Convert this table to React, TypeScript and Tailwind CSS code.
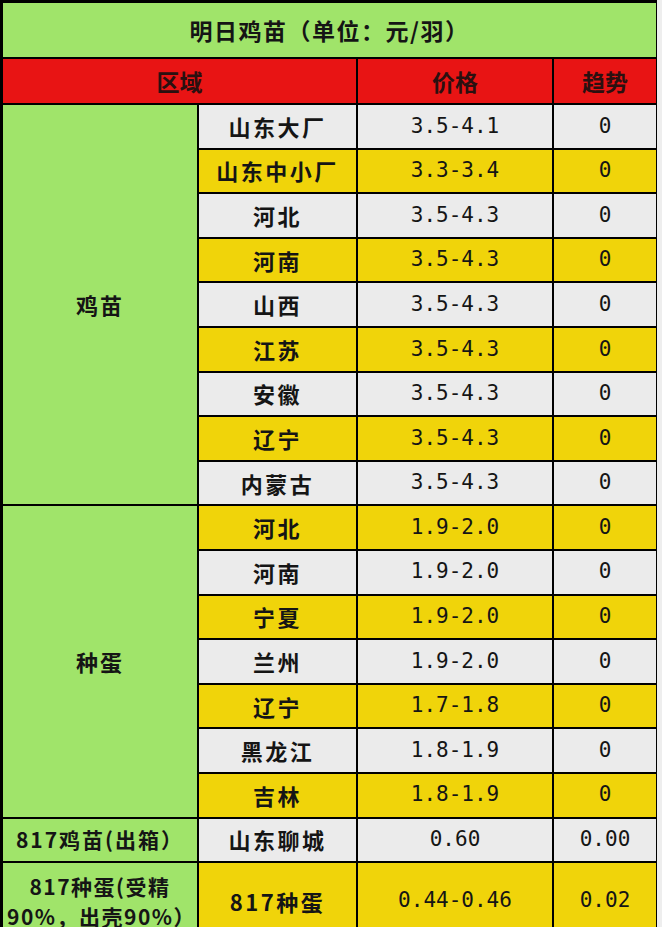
import React from 'react'

const cjk = "font-['Noto_Sans_CJK_SC',sans-serif]";
const mono = "font-['DejaVu_Sans_Mono',monospace]";

const chick = [
  ['山东大厂', '3.5-4.1', '0'],
  ['山东中小厂', '3.3-3.4', '0'],
  ['河北', '3.5-4.3', '0'],
  ['河南', '3.5-4.3', '0'],
  ['山西', '3.5-4.3', '0'],
  ['江苏', '3.5-4.3', '0'],
  ['安徽', '3.5-4.3', '0'],
  ['辽宁', '3.5-4.3', '0'],
  ['内蒙古', '3.5-4.3', '0'],
];

const eggs = [
  ['河北', '1.9-2.0', '0'],
  ['河南', '1.9-2.0', '0'],
  ['宁夏', '1.9-2.0', '0'],
  ['兰州', '1.9-2.0', '0'],
  ['辽宁', '1.7-1.8', '0'],
  ['黑龙江', '1.8-1.9', '0'],
  ['吉林', '1.8-1.9', '0'],
];

const Row = ({ row, yellow }: { row: string[]; yellow: boolean }) => {
  const bg = yellow ? 'bg-[#f0d40a]' : 'bg-[#ebebeb]';
  return (
    <>
      <div className={`${bg} flex items-center justify-center ${cjk} font-bold text-[22px] tracking-[2.5px] text-[#151515]`}>
        {row[0]}
      </div>
      <div className={`${bg} flex items-center justify-center ${mono} text-[21px] text-[#151515]`}>
        {row[1]}
      </div>
      <div className={`${bg} flex items-center justify-center ${mono} text-[21px] text-[#151515]`}>
        {row[2]}
      </div>
    </>
  );
};

export default function App() {
  return (
    <div className="w-[662px] h-[927px] overflow-hidden bg-[#eeeeee]">
      <div className="w-[657px] bg-black pl-[3px] pr-[1px] pt-[3px] grid grid-cols-[194px_157px_194px_102px] grid-rows-[54px_44px_repeat(16,42.6px)_42.6px_76px] gap-[2px]">
        {/* title */}
        <div className={`col-span-4 bg-[#a0e46a] flex items-center justify-center ${cjk} font-bold text-[23px] tracking-[1.5px] text-[#151515]`}>
          明日鸡苗（单位：元/羽）
        </div>

        {/* header */}
        <div className={`col-span-2 bg-[#e81414] flex items-center justify-center ${cjk} font-bold text-[23px] text-[#2a1010]`}>
          区域
        </div>
        <div className={`bg-[#e81414] flex items-center justify-center ${cjk} font-bold text-[23px] text-[#2a1010]`}>
          价格
        </div>
        <div className={`bg-[#e81414] flex items-center justify-center ${cjk} font-bold text-[23px] text-[#2a1010]`}>
          趋势
        </div>

        {/* 鸡苗 */}
        <div className={`row-span-9 bg-[#a0e46a] flex items-center justify-center ${cjk} font-bold text-[22px] tracking-[2px] text-[#151515]`}>
          鸡苗
        </div>
        {chick.map((r, i) => (
          <Row key={'c' + i} row={r} yellow={i % 2 === 1} />
        ))}

        {/* 种蛋 */}
        <div className={`row-span-7 bg-[#a0e46a] flex items-center justify-center ${cjk} font-bold text-[22px] tracking-[2px] text-[#151515]`}>
          种蛋
        </div>
        {eggs.map((r, i) => (
          <Row key={'e' + i} row={r} yellow={i % 2 === 0} />
        ))}

        {/* 817 */}
        <div className={`bg-[#a0e46a] flex items-center justify-center ${cjk} font-bold text-[21px] tracking-[2px] text-[#151515]`}>
          817鸡苗(出箱）
        </div>
        <Row row={['山东聊城', '0.60', '0.00']} yellow={false} />

        <div className={`bg-[#a0e46a] flex items-center justify-center text-center ${cjk} font-bold text-[21px] leading-[30px] tracking-[1.5px] text-[#151515] px-1`}>
          817种蛋(受精90%，出壳90%）
        </div>
        <Row row={['817种蛋', '0.44-0.46', '0.02']} yellow={true} />
      </div>
    </div>
  );
}
